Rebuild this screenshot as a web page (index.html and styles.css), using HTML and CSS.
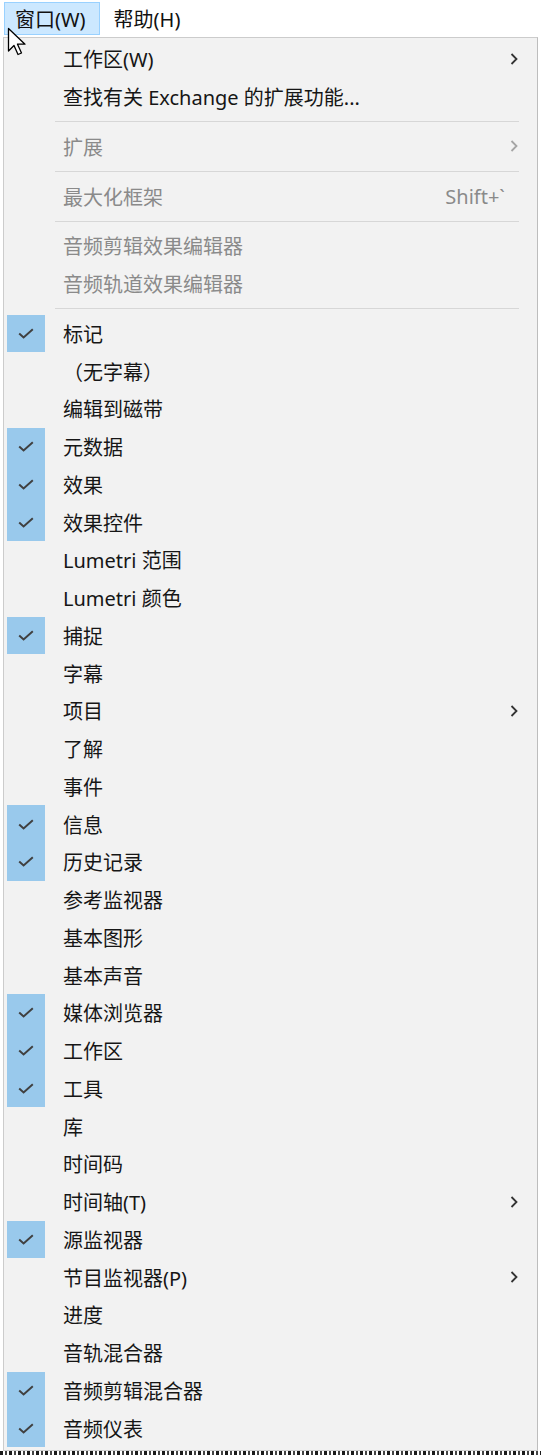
FILE: index.html
```html
<!DOCTYPE html>
<html lang="zh-CN">
<head>
  <meta charset="UTF-8">
  <title>窗口菜单</title>
  <link rel="stylesheet" href="styles.css">
</head>
<body>
  <div class="menubar">
    <span class="top active">窗口(W)</span>
    <span class="top">帮助(H)</span>
  </div>
  <svg class="cursor" width="22" height="32" viewBox="0 0 22 32">
    <path d="M1.5 1.5 L1.5 24 L7 18.5 L11 27.5 L14.5 26 L10.5 17.2 L18 17.2 Z" fill="#fff" stroke="#000" stroke-width="1.3" stroke-linejoin="round"/>
  </svg>

  <div class="menu">
    <div class="item"><span class="check"></span><span class="label">工作区(W)</span><span class="arrow"></span></div>
    <div class="item"><span class="check"></span><span class="label">查找有关 Exchange 的扩展功能...</span></div>
    <div class="sep"></div>
    <div class="item disabled"><span class="check"></span><span class="label">扩展</span><span class="arrow"></span></div>
    <div class="sep"></div>
    <div class="item disabled"><span class="check"></span><span class="label">最大化框架</span><span class="key">Shift+`</span></div>
    <div class="sep"></div>
    <div class="item disabled"><span class="check"></span><span class="label">音频剪辑效果编辑器</span></div>
    <div class="item disabled"><span class="check"></span><span class="label">音频轨道效果编辑器</span></div>
    <div class="sep"></div>
    <div class="item on"><span class="check"></span><span class="label">标记</span></div>
    <div class="item"><span class="check"></span><span class="label">（无字幕）</span></div>
    <div class="item"><span class="check"></span><span class="label">编辑到磁带</span></div>
    <div class="item on"><span class="check"></span><span class="label">元数据</span></div>
    <div class="item on"><span class="check"></span><span class="label">效果</span></div>
    <div class="item on"><span class="check"></span><span class="label">效果控件</span></div>
    <div class="item"><span class="check"></span><span class="label">Lumetri 范围</span></div>
    <div class="item"><span class="check"></span><span class="label">Lumetri 颜色</span></div>
    <div class="item on"><span class="check"></span><span class="label">捕捉</span></div>
    <div class="item"><span class="check"></span><span class="label">字幕</span></div>
    <div class="item"><span class="check"></span><span class="label">项目</span><span class="arrow"></span></div>
    <div class="item"><span class="check"></span><span class="label">了解</span></div>
    <div class="item"><span class="check"></span><span class="label">事件</span></div>
    <div class="item on"><span class="check"></span><span class="label">信息</span></div>
    <div class="item on"><span class="check"></span><span class="label">历史记录</span></div>
    <div class="item"><span class="check"></span><span class="label">参考监视器</span></div>
    <div class="item"><span class="check"></span><span class="label">基本图形</span></div>
    <div class="item"><span class="check"></span><span class="label">基本声音</span></div>
    <div class="item on"><span class="check"></span><span class="label">媒体浏览器</span></div>
    <div class="item on"><span class="check"></span><span class="label">工作区</span></div>
    <div class="item on"><span class="check"></span><span class="label">工具</span></div>
    <div class="item"><span class="check"></span><span class="label">库</span></div>
    <div class="item"><span class="check"></span><span class="label">时间码</span></div>
    <div class="item"><span class="check"></span><span class="label">时间轴(T)</span><span class="arrow"></span></div>
    <div class="item on"><span class="check"></span><span class="label">源监视器</span></div>
    <div class="item"><span class="check"></span><span class="label">节目监视器(P)</span><span class="arrow"></span></div>
    <div class="item"><span class="check"></span><span class="label">进度</span></div>
    <div class="item"><span class="check"></span><span class="label">音轨混合器</span></div>
    <div class="item on"><span class="check"></span><span class="label">音频剪辑混合器</span></div>
    <div class="item on"><span class="check"></span><span class="label">音频仪表</span></div>
  </div>
  <div class="under"></div>
</body>
</html>
```

FILE: styles.css
```css
body {
  margin: 0;
  width: 541px;
  height: 1456px;
  overflow: hidden;
  background: #ffffff;
  font-family: "Noto Sans", "Noto Sans CJK SC", sans-serif;
  position: relative;
}
.menubar {
  height: 37px;
  display: flex;
  align-items: center;
  padding-left: 4px;
  gap: 3px;
  box-sizing: border-box;
  padding-top: 1px;
  padding-bottom: 1px;
}
.top {
  font-size: 20px;
  color: #111;
  height: 33px;
  display: flex;
  align-items: center;
  padding: 0 13px 0 10px;
  box-sizing: border-box;
  border: 1px solid transparent;
}
.top.active {
  background: #cce8ff;
  border-color: #99d1ff;
}
.cursor {
  position: absolute;
  left: 7px;
  top: 27px;
}
.menu {
  margin-left: 3px;
  width: 535px;
  box-sizing: border-box;
  background: #f2f2f2;
  border: 1px solid #cccccc;
  border-right-color: #bdbdbd;
  padding: 2px 0 3px 0;
}
.item {
  height: 37.75px;
  display: flex;
  align-items: center;
  font-size: 20px;
  color: #161616;
}
.check {
  width: 38px;
  height: 100%;
  margin-left: 3px;
  margin-right: 18px;
  flex: none;
  box-sizing: border-box;
}
.item.on .check {
  background: #99c9ec url("data:image/svg+xml,%3Csvg xmlns='http://www.w3.org/2000/svg' width='16' height='11'%3E%3Cpath d='M1.2 5.4 L5.6 9.4 L14.8 1.2' fill='none' stroke='%23404040' stroke-width='2'/%3E%3C/svg%3E") no-repeat center;
}
.label {
  flex: 1;
  white-space: nowrap;
}
.item.disabled {
  color: #8a8a8a;
}
.key {
  margin-right: 32px;
  font-size: 20px;
}
.arrow {
  width: 10px;
  height: 14px;
  margin-right: 18px;
  background: url("data:image/svg+xml,%3Csvg xmlns='http://www.w3.org/2000/svg' width='10' height='14'%3E%3Cpath d='M2.5 2 L7.5 7 L2.5 12' fill='none' stroke='%23333' stroke-width='1.8'/%3E%3C/svg%3E") no-repeat center;
}
.item.disabled .arrow {
  opacity: 0.4;
}
.sep {
  height: 12px;
  display: flex;
  align-items: center;
  padding: 0 18px 0 51px;
}
.sep::before {
  content: "";
  flex: 1;
  height: 1px;
  background: #d7d7d7;
}
.under {
  height: 4px;
  background: repeating-linear-gradient(90deg, #1a1a1a 0 3px, #ffffff 3px 5px, #444 5px 7px, #fff 7px 9px);
}
```
